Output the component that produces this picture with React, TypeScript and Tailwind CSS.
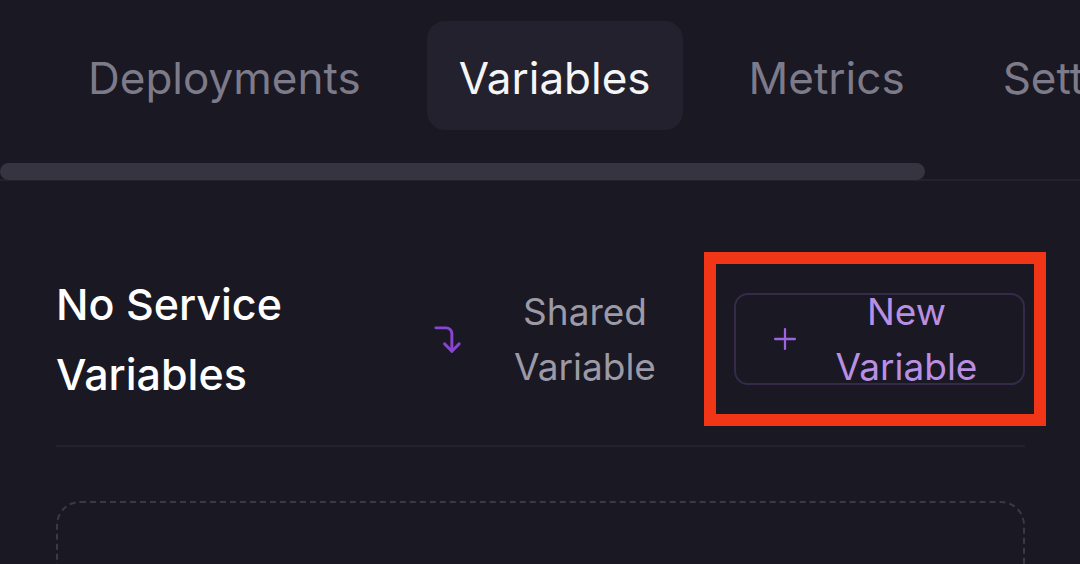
import { CornerRightDown, Plus } from "lucide-react";

const tabs = ["Deployments", "Variables", "Metrics", "Settings"];

export default function App() {
    return (
        <div className="relative w-[1080px] h-[564px] overflow-hidden bg-[#191823] font-['Inter',sans-serif]">
            <div className="relative">
                <div className="flex flex-row gap-[34px] pl-[56px] pt-[21px] whitespace-nowrap">
                    {tabs.map((t) => (
                        <div
                            key={t}
                            className={
                                t === "Variables"
                                    ? "h-[109px] px-[32px] pt-[4px] flex items-center rounded-[18px] bg-[#22212d] text-[#f5f5f7] text-[44px]"
                                    : "h-[109px] px-[32px] pt-[4px] flex items-center text-[#7d7b89] text-[44px]"
                            }
                        >
                            {t}
                        </div>
                    ))}
                </div>
                <div className="mt-[33px] h-[18px] relative">
                    <div className="absolute left-0 right-0 bottom-0 h-[2px] bg-[#23222d]" />
                    <div className="absolute left-0 top-0 w-[925px] h-[17px] rounded-full bg-[#353440]" />
                </div>
            </div>

            <div className="px-[55px] pl-[56px]">
                <div className="flex flex-row items-center mt-[88px] pb-[36px] border-b-2 border-[#23222d]">
                    <div className="flex-1 min-w-0 text-white text-[43px] font-medium leading-[70px]">
                        No Service Variables
                    </div>
                    <div className="flex flex-row items-center gap-[20px] px-[32px] h-[92px]">
                        <CornerRightDown className="w-[35px] h-[35px] text-[#8a44d4]" strokeWidth={2} />
                        <span className="w-[200px] text-center text-[#9c9aa6] text-[37px] leading-[55px]">
                            Shared Variable
                        </span>
                    </div>
                    <div className="ml-[17px] flex flex-row items-center gap-[20px] w-[291px] h-[92px] px-[32px] rounded-[14px] border-2 border-[#352a4a]">
                        <Plus className="w-[34px] h-[34px] text-[#9e63df] shrink-0" strokeWidth={1.6} />
                        <span className="flex-1 text-center text-[#b98fe4] text-[37px] leading-[55px]">
                            New Variable
                        </span>
                    </div>
                </div>

                <div className="mt-[54px] h-[200px] rounded-[24px] border-2 border-dashed border-[#3a3946]" />
            </div>

            <div className="absolute left-[704px] top-[252px] w-[342px] h-[174px] border-[12px] border-[#f03616]" />
        </div>
    );
}
